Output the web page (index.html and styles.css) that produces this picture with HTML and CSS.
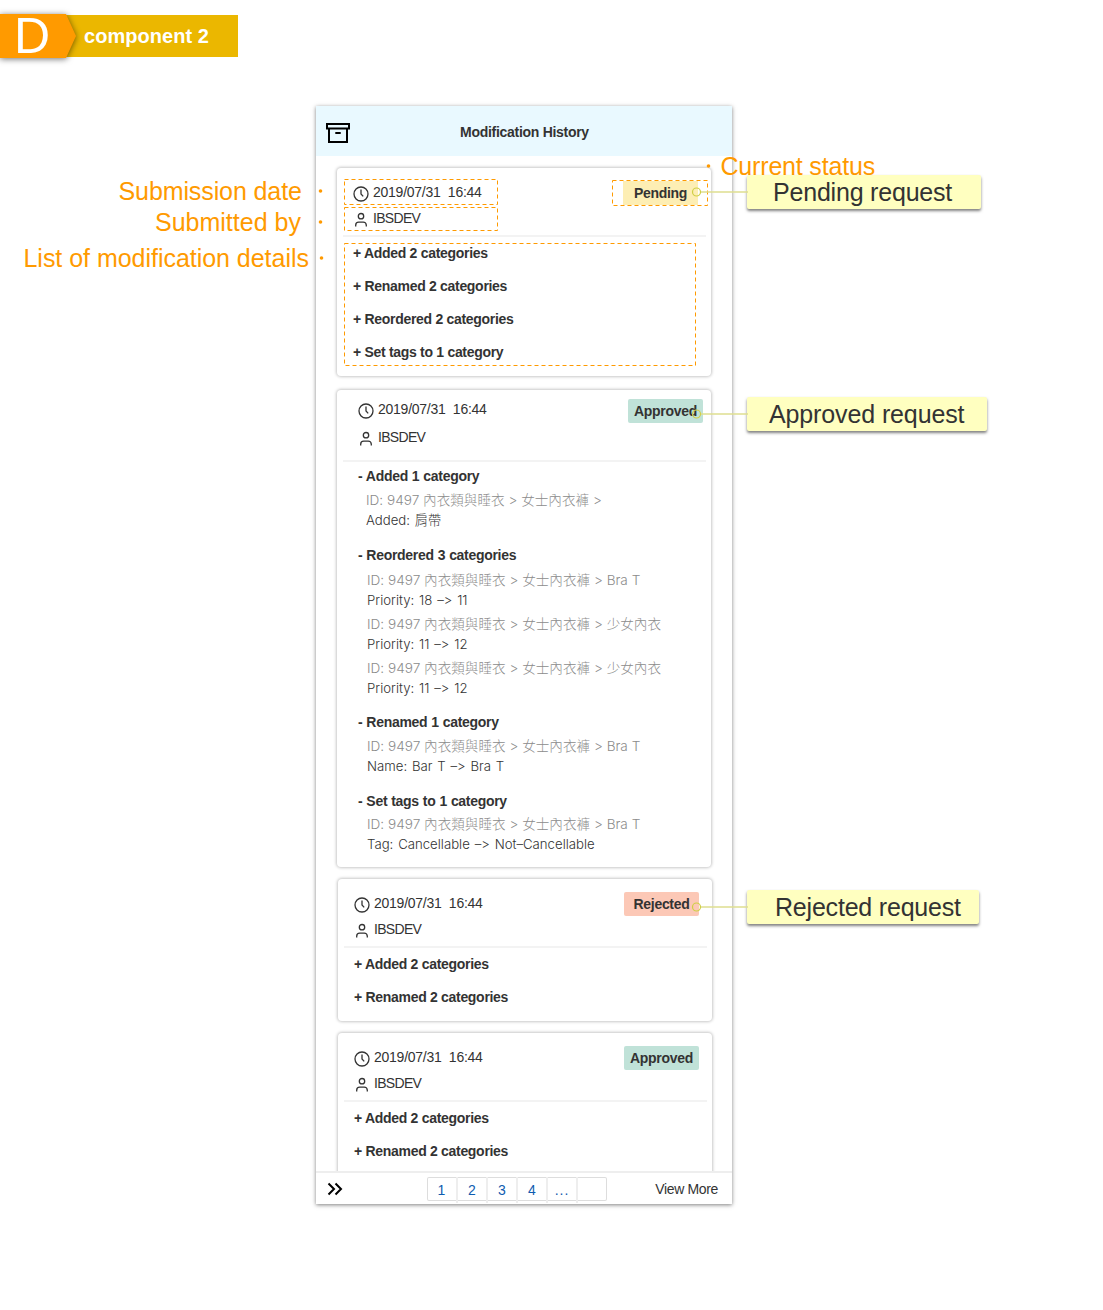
FILE: index.html
```html
<!DOCTYPE html>
<html lang="en">
<head>
<meta charset="utf-8">
<title>Modification History</title>
<link rel="stylesheet" href="styles.css">
</head>
<body>
<svg class="defs" width="0" height="0" aria-hidden="true">
  <symbol id="clock" viewBox="0 0 16 16"><circle cx="8" cy="8" r="7"/><path d="M8 3.6V8l2.2 2.4"/></symbol>
  <symbol id="user" viewBox="0 0 16 16"><circle cx="8" cy="4.2" r="2.7"/><path d="M2.7 14.6v-1.4a3 3 0 0 1 3-3h4.6a3 3 0 0 1 3 3v1.4"/></symbol>
</svg>

<div class="page">
  <header class="tag">
    <div class="tag-mark"><span class="tag-letter">D</span></div>
    <div class="tag-name">component 2</div>
  </header>

  <main class="panel">
    <div class="panel-head">
      <svg class="archive" width="26" height="22" viewBox="0 0 26 22"><path d="M2 2h22v4.600H2zM4 6.600V20h18V6.600M10.300 10.900h5.400"/></svg>
      <h1>Modification History</h1>
    </div>

    <div class="cards">
      <section class="card">
        <div class="meta">
          <div class="who">
            <div class="line date"><svg><use href="#clock"/></svg>2019/07/31&nbsp; 16:44</div>
            <div class="line name"><svg><use href="#user"/></svg>IBSDEV</div>
          </div>
          <span class="badge pending">Pending</span>
        </div>
        <ul class="changes">
          <li>+ Added 2 categories</li>
          <li>+ Renamed 2 categories</li>
          <li>+ Reordered 2 categories</li>
          <li>+ Set tags to 1 category</li>
        </ul>
      </section>

      <section class="card open">
        <div class="meta">
          <div class="who">
            <div class="line date"><svg><use href="#clock"/></svg>2019/07/31&nbsp; 16:44</div>
            <div class="line name"><svg><use href="#user"/></svg>IBSDEV</div>
          </div>
          <span class="badge approved">Approved</span>
        </div>
        <div class="groups">
          <div class="group added">
            <h2>- Added 1 category</h2>
            <div class="entry"><p class="path">ID: 9497 內衣類與睡衣 &gt; 女士內衣褲 &gt;</p><p>Added: 肩帶</p></div>
          </div>
          <div class="group reordered">
            <h2>- Reordered 3 categories</h2>
            <div class="entry"><p class="path">ID: 9497 內衣類與睡衣 &gt; 女士內衣褲 &gt; Bra T</p><p>Priority: 18 –&gt; 11</p></div>
            <div class="entry"><p class="path">ID: 9497 內衣類與睡衣 &gt; 女士內衣褲 &gt; 少女內衣</p><p>Priority: 11 –&gt; 12</p></div>
            <div class="entry"><p class="path">ID: 9497 內衣類與睡衣 &gt; 女士內衣褲 &gt; 少女內衣</p><p>Priority: 11 –&gt; 12</p></div>
          </div>
          <div class="group">
            <h2>- Renamed 1 category</h2>
            <div class="entry"><p class="path">ID: 9497 內衣類與睡衣 &gt; 女士內衣褲 &gt; Bra T</p><p>Name: Bar T –&gt; Bra T</p></div>
          </div>
          <div class="group tags">
            <h2>- Set tags to 1 category</h2>
            <div class="entry"><p class="path">ID: 9497 內衣類與睡衣 &gt; 女士內衣褲 &gt; Bra T</p><p>Tag: Cancellable –&gt; Not–Cancellable</p></div>
          </div>
        </div>
      </section>

      <section class="card shifted">
        <div class="meta">
          <div class="who">
            <div class="line date"><svg><use href="#clock"/></svg>2019/07/31&nbsp; 16:44</div>
            <div class="line name"><svg><use href="#user"/></svg>IBSDEV</div>
          </div>
          <span class="badge rejected">Rejected</span>
        </div>
        <ul class="changes">
          <li>+ Added 2 categories</li>
          <li>+ Renamed 2 categories</li>
        </ul>
      </section>

      <section class="card shifted">
        <div class="meta">
          <div class="who">
            <div class="line date"><svg><use href="#clock"/></svg>2019/07/31&nbsp; 16:44</div>
            <div class="line name"><svg><use href="#user"/></svg>IBSDEV</div>
          </div>
          <span class="badge approved">Approved</span>
        </div>
        <ul class="changes">
          <li>+ Added 2 categories</li>
          <li>+ Renamed 2 categories</li>
        </ul>
      </section>
    </div>

    <footer class="panel-foot">
      <svg class="collapse" width="16" height="14" viewBox="0 0 16 14"><path d="M1.500 1.500 7 7l-5.500 5.500M8.500 1.500 14 7l-5.500 5.500"/></svg>
      <nav class="pages"><a>1</a><a>2</a><a>3</a><a>4</a><a class="dots">...</a><a></a></nav>
      <span class="more">View More</span>
    </footer>
  </main>

  <!-- Callouts laid over the panel -->
  <div class="note note-date">Submission date</div>
  <div class="note note-by">Submitted by</div>
  <div class="note note-list">List of modification details</div>
  <div class="note note-status">Current status</div>
  <div class="callout callout-pending">Pending request</div>
  <div class="callout callout-approved">Approved request</div>
  <div class="callout callout-rejected">Rejected request</div>
  <svg class="marks" width="1103" height="1310" viewBox="0 0 1103 1310">
    <g class="frames">
      <rect x="344.500" y="179.500" width="153" height="25"/>
      <rect x="344.500" y="207.500" width="153" height="23"/>
      <rect x="612.500" y="180.500" width="95" height="25"/>
      <rect x="344.500" y="243.500" width="351" height="122"/>
    </g>
    <g class="bullets">
      <circle cx="320.500" cy="191" r="1.800"/>
      <circle cx="320.500" cy="222" r="1.800"/>
      <circle cx="321.500" cy="258" r="1.800"/>
      <circle cx="708.500" cy="166" r="1.800"/>
    </g>
    <g class="links">
      <path d="M701 192H748M701 414H748M701 907H748"/>
      <circle cx="696.500" cy="192" r="4"/>
      <circle cx="696.500" cy="414" r="4"/>
      <circle cx="696.500" cy="907" r="4"/>
    </g>
  </svg>
</div>
</body>
</html>
```
FILE: styles.css
```css
* { box-sizing: border-box; }
body {
  margin: 0;
  background: #fff;
  color: #333;
  font: 14px/20px "Liberation Sans", "Noto Sans CJK TC", sans-serif;
}
h1, h2, p, ul { margin: 0; padding: 0; font-size: inherit; }
ul { list-style: none; }
.defs { position: absolute; }
.page { position: relative; width: 1103px; height: 1310px; padding-top: 14px; overflow: hidden; }

/* Section tag */
.tag { display: flex; align-items: flex-start; height: 44px; color: #fff; }
.tag-mark { z-index: 1; width: 77px; height: 44px; filter: drop-shadow(0 1px 3px rgba(0, 0, 0, .55)); }
.tag-letter {
  display: block;
  height: 44px;
  padding-left: 14px;
  background: #ff9a00;
  clip-path: polygon(0 0, 66px 0, 76px 22px, 66px 100%, 0 100%);
  font-size: 50px;
  line-height: 44px;
}
.tag-name {
  width: 172px;
  height: 42px;
  margin: 1px 0 0 -11px;
  padding-left: 18px;
  background: #ebb700;
  font-size: 20px;
  font-weight: 700;
  line-height: 43px;
  letter-spacing: .05px;
}

/* Panel */
.panel {
  display: flex;
  flex-direction: column;
  width: 416px;
  height: 1098px;
  margin: 48px 0 0 316px;
  background: #fff;
  box-shadow: 0 1px 4px rgba(0, 0, 0, .5);
}
.panel-head {
  display: grid;
  grid-template-columns: 60px 1fr 60px;
  align-items: center;
  height: 50px;
  background: #e9f9ff;
}
.archive { margin: 4px 0 0 9px; fill: none; stroke: #000; stroke-width: 2; }
h1 { padding: 2px 0 0 1px; text-align: center; letter-spacing: -.29px; }
.cards {
  flex: 1;
  display: flex;
  flex-direction: column;
  min-height: 0;
  padding: 12px 21px 0;
  overflow: hidden;
}
.card {
  --indent: 16px;
  flex: none;
  width: 374px;
  height: 208px;
  border-radius: 4px;
  box-shadow: 0 0 3px 1px rgba(0, 0, 0, .22);
  background: #fff;
}
.card.open { height: 477px; margin-top: 14px; --indent: 21px; }
.card.shifted { height: 142px; margin: 12px 0 0 1px; }
.meta {
  display: flex;
  justify-content: space-between;
  height: 69px;
  margin: 0 5px 0 6px;
  padding: 13px 8px 0 calc(var(--indent) - 6px);
  border-bottom: 2px solid #f3f3f3;
}
.who { display: flex; flex-direction: column; gap: 6px; padding-top: 1px; }
.line { display: flex; height: 20px; letter-spacing: -.25px; white-space: pre; }
.line svg { width: 16px; height: 16px; margin: 4px 4px 0 0; fill: none; stroke: #333; stroke-width: 1.3; }
.name { letter-spacing: -.7px; }
.open .meta { height: 72px; padding: 9px 3px 0 15px; }
.open .who { gap: 8px; padding-top: 0; }
.badge {
  width: 75px;
  height: 24px;
  border-radius: 2px;
  font-weight: 700;
  line-height: 24px;
  letter-spacing: -.3px;
  text-align: center;
}
.pending { background: #fdeeb4; border-radius: 0; }
.approved { background: #c0e2d8; }
.rejected { background: #fcc8b6; }
.changes {
  display: flex;
  flex-direction: column;
  gap: 13px;
  padding: 6px 0 0 16px;
  font-weight: 700;
  letter-spacing: -.3px;
}

/* Expanded change groups */
.groups { display: flex; flex-direction: column; gap: 15px; padding: 4px 0 0 21px; }
.group { display: flex; flex-direction: column; gap: 4px; }
h2 { letter-spacing: -.3px; word-spacing: .4px; }
.entry {
  padding-left: 9px;
  font: 300 13.2px/20px Inter, "Noto Sans CJK TC", sans-serif;
  font-feature-settings: "calt" 0;
  white-space: nowrap;
  word-spacing: 1.1px;
}
.path { color: #8c8c8c; font-size: 13.6px; word-spacing: 0; }
.added .entry { padding-left: 8px; }
.reordered h2 { margin-bottom: 1px; }
.reordered { margin-bottom: -1px; }
.tags h2 { margin-bottom: -1px; }

/* Footer */
.panel-foot {
  display: flex;
  height: 33px;
  padding: 4px 14px 0 11px;
  border-top: 2px solid #eee;
}
.collapse { margin-top: 5px; fill: none; stroke: #000; stroke-width: 2; }
.pages {
  display: grid;
  grid-template-columns: 29px repeat(4, 30px) 31px;
  height: 24px;
  margin: 0 auto 0 84px;
  border-radius: 2px;
  box-shadow: inset 0 0 0 1px #ddd;
  color: #0f5cb0;
  line-height: 26px;
  text-align: center;
}
.pages a + a { border-left: 2px solid #eee; }
.pages .dots { letter-spacing: 1px; }
.more { padding-top: 2px; letter-spacing: -.35px; }

/* Callouts */
.note, .callout { position: absolute; font-size: 25px; line-height: 30px; white-space: nowrap; }
.note { color: #ff9a00; letter-spacing: -.1px; }
.note-date { left: 118.5px; top: 176px; }
.note-by { left: 155px; top: 207px; letter-spacing: 0; }
.note-list { left: 23.5px; top: 243px; letter-spacing: -.03px; }
.note-status { left: 720.5px; top: 151px; letter-spacing: -.18px; }
.callout {
  left: 747px;
  height: 34px;
  padding-top: 2px;
  border-radius: 2px;
  background: #ffffc0;
  box-shadow: 0 2px 3px rgba(0, 0, 0, .5);
  letter-spacing: -.2px;
}
.callout-pending { top: 175px; width: 234px; padding-left: 26px; }
.callout-approved { top: 397px; width: 240px; padding-left: 22px; letter-spacing: -.12px; }
.callout-rejected { top: 890px; width: 232px; padding-left: 28px; }
.marks { position: absolute; left: 0; top: 0; fill: none; }
.frames { stroke: #ff9a00; stroke-dasharray: 4 3; }
.bullets { fill: #ff9a00; }
.links path { stroke: #dede90; stroke-width: 1.5px; }
.links circle { stroke: #d0cf45; stroke-width: 1.2px; }
```
